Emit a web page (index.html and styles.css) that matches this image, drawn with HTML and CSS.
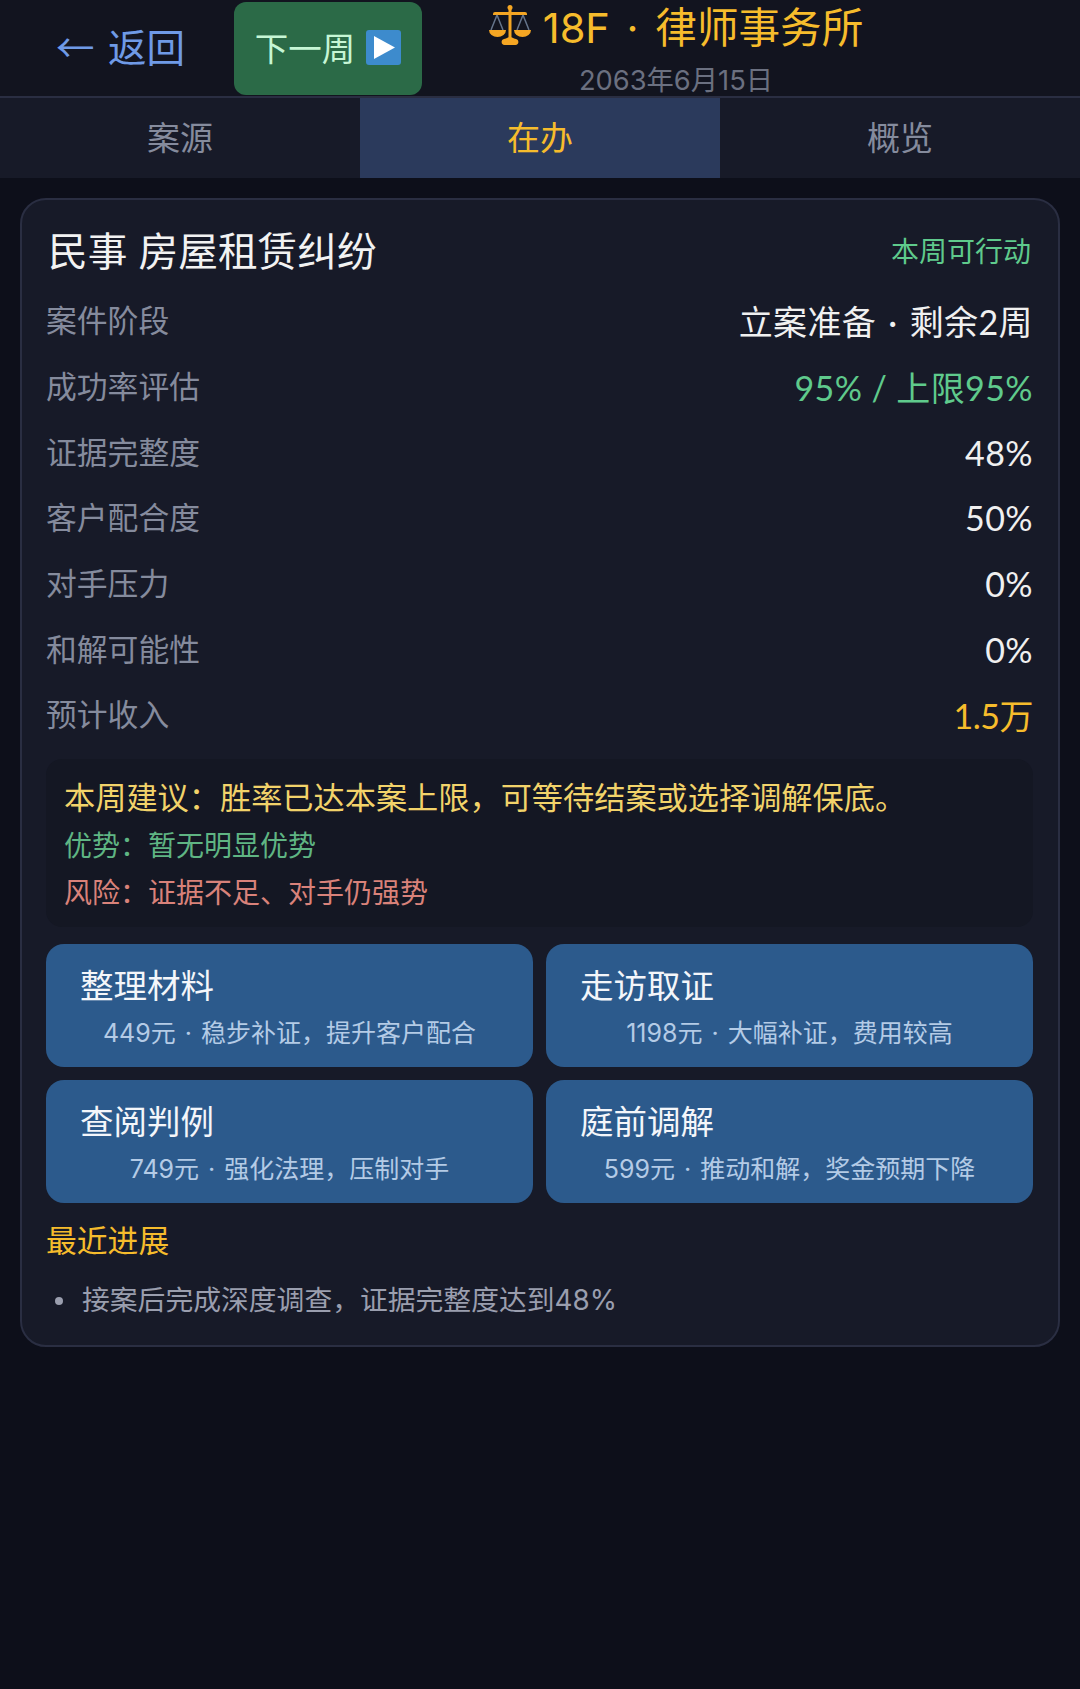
FILE: index.html
```html
<!DOCTYPE html>
<html lang="zh-CN">
<head>
    <meta charset="UTF-8">
    <meta name="viewport" content="width=device-width, initial-scale=1.0">
    <title>18F · 律师事务所</title>
    <link rel="stylesheet" href="styles.css">
</head>
<body>

<header class="topbar">
    <a class="back">← 返回</a>
    <button class="next-week">
        下一周
        <svg class="play-icon" viewBox="0 0 35 35">
            <rect width="35" height="35" rx="3" fill="#3d8bcd"/>
            <path d="M8 6 L29 17.500 L8 29 Z" fill="#fff"/>
        </svg>
    </button>
    <div class="heading">
        <div class="office">
            <svg class="scales-icon" viewBox="0 0 42 40">
                <circle cx="21" cy="2.500" r="2.500" fill="#f5a623"/>
                <path d="M19.500 4 h3 v30 h-3 Z" fill="#f5a623"/>
                <path d="M6 7 h30 a2 2 0 0 1 2 2 v1 h-34 v-1 a2 2 0 0 1 2 -2 Z" fill="#f5a623"/>
                <path d="M8 10 L2 25 M8 10 L14 25 M34 10 L28 25 M34 10 L40 25" stroke="#66758c" stroke-width="1.500" fill="none"/>
                <path d="M0 25 h17 a8.500 7 0 0 1 -17 0 Z M25 25 h17 a8.500 7 0 0 1 -17 0 Z" fill="#f5a623"/>
                <path d="M21 32 c2 0 3 1.500 6 2 c3.500 .6 3 6 -.5 6 h-11 c-3.500 0 -4 -5.400 -.5 -6 c3 -.5 4 -2 6 -2 Z" fill="#f5a623"/>
            </svg>
            <span>18F · 律师事务所</span>
        </div>
        <div class="date">2063年6月15日</div>
    </div>
</header>

<nav class="tabs">
    <div class="tab">案源</div>
    <div class="tab active">在办</div>
    <div class="tab">概览</div>
</nav>

<main class="card">
    <div class="card-head">
        <div class="case-title">民事 房屋租赁纠纷</div>
        <div class="case-status">本周可行动</div>
    </div>

    <div class="row"><span class="label">案件阶段</span><span class="value">立案准备 · 剩余2周</span></div>
    <div class="row"><span class="label">成功率评估</span><span class="value green">95% / 上限95%</span></div>
    <div class="row"><span class="label">证据完整度</span><span class="value">48%</span></div>
    <div class="row"><span class="label">客户配合度</span><span class="value">50%</span></div>
    <div class="row"><span class="label">对手压力</span><span class="value">0%</span></div>
    <div class="row"><span class="label">和解可能性</span><span class="value">0%</span></div>
    <div class="row"><span class="label">预计收入</span><span class="value gold">1.5万</span></div>

    <div class="advice">
        <div class="advice-main">本周建议：胜率已达本案上限，可等待结案或选择调解保底。</div>
        <div class="advice-good">优势：暂无明显优势</div>
        <div class="advice-risk">风险：证据不足、对手仍强势</div>
    </div>

    <div class="actions">
        <button class="action">
            <span class="action-name">整理材料</span>
            <span class="action-desc">449元 · 稳步补证，提升客户配合</span>
        </button>
        <button class="action">
            <span class="action-name">走访取证</span>
            <span class="action-desc">1198元 · 大幅补证，费用较高</span>
        </button>
        <button class="action">
            <span class="action-name">查阅判例</span>
            <span class="action-desc">749元 · 强化法理，压制对手</span>
        </button>
        <button class="action">
            <span class="action-name">庭前调解</span>
            <span class="action-desc">599元 · 推动和解，奖金预期下降</span>
        </button>
    </div>

    <div class="progress-title">最近进展</div>
    <ul class="progress">
        <li>接案后完成深度调查，证据完整度达到48%</li>
    </ul>
</main>

</body>
</html>
```

FILE: styles.css
```css
* {
    box-sizing: border-box;
}
body {
    margin: 0;
    min-height: 1689px;
    background: #0d0f1a;
    font-family: Inter, "Noto Sans CJK SC", sans-serif;
    font-weight: 400;
}
button {
    font-family: inherit;
    border: none;
}
.topbar {
    height: 98px;
    background: #12141f;
    border-bottom: 2px solid #2a2e42;
    display: flex;
    padding-left: 56px;
}
.back {
    width: 178px;
    font-family: "Noto Sans CJK SC", sans-serif;
    font-size: 38.500px;
    line-height: 91px;
    word-spacing: 5px;
    color: #6f9ae6;
}
.next-week {
    width: 188px;
    height: 93px;
    margin-top: 2px;
    padding-bottom: 6px;
    background: #2b6a47;
    border-radius: 12px;
    color: #c6f6d5;
    font-size: 33.500px;
    display: flex;
    align-items: center;
    justify-content: center;
    gap: 11px;
}
.play-icon {
    width: 35px;
    height: 35px;
    margin-top: 2px;
}
.heading {
    width: 432px;
    margin-left: 38px;
    text-align: center;
}
.office {
    display: flex;
    align-items: center;
    justify-content: center;
    gap: 12px;
    height: 50px;
    font-size: 41.600px;
    word-spacing: 5px;
    color: #f6bc2c;
}
.scales-icon {
    width: 42px;
    height: 40px;
}
.date {
    margin-top: 6px;
    font-size: 27.300px;
    line-height: 50px;
    color: #6b7080;
}
.tabs {
    display: grid;
    grid-template-columns: repeat(3, 1fr);
    height: 80px;
    background: #171a28;
}
.tab {
    text-align: center;
    font-size: 33px;
    line-height: 80px;
    color: #858b9d;
}
.tab.active {
    background: #2b3a5c;
    color: #f6bc2c;
}
.card {
    width: 1040px;
    margin: 20px 20px 0;
    height: 1149px;
    background: #171a28;
    border: 2px solid #2a2e42;
    border-radius: 26px;
    padding: 18px 25px 20px 24px;
}
.card-head {
    display: flex;
    justify-content: space-between;
    align-items: center;
    height: 60px;
    margin-bottom: 9px;
    padding: 0 2px;
}
.case-title {
    font-size: 39.700px;
    color: #f2f2f2;
}
.case-status {
    padding-top: 3px;
    font-size: 28px;
    color: #5fca8c;
}
.row {
    display: flex;
    justify-content: space-between;
    align-items: center;
    height: 65.700px;
}
.label {
    padding-bottom: 2px;
    font-size: 30.800px;
    color: #858b9d;
}
.value {
    padding-top: 2px;
    font-family: Lato, "Noto Sans CJK SC", sans-serif;
    font-size: 34px;
    letter-spacing: 0.4px;
    word-spacing: 3px;
    color: #f0f0f0;
}
.green {
    word-spacing: 0;
    color: #5fca8c;
}
.gold {
    letter-spacing: -0.5px;
    color: #f6bc2c;
}
.advice {
    margin-top: 12px;
    height: 168px;
    background: #141723;
    border-radius: 16px;
    padding: 16px 18px;
}
.advice-main {
    font-size: 31.200px;
    line-height: 46px;
    color: #f2d36a;
}
.advice-good {
    margin-top: 1px;
    font-size: 28px;
    line-height: 48px;
    color: #5fb583;
}
.advice-risk {
    margin-top: -1px;
    font-size: 28px;
    line-height: 48px;
    color: #d9827a;
}
.actions {
    display: grid;
    grid-template-columns: 1fr 1fr;
    gap: 13px;
    margin-top: 17px;
}
.action {
    height: 123px;
    background: #2c5a8c;
    border-radius: 18px;
    padding: 2px 34px 0;
    text-align: center;
}
.action-name {
    display: block;
    text-align: left;
    font-size: 33.500px;
    line-height: 53px;
    color: #f4f6fa;
}
.action-desc {
    display: block;
    font-size: 25px;
    line-height: 40px;
    word-spacing: 2px;
    color: #b4cbe6;
}
.progress-title {
    margin-top: 13px;
    font-size: 30.800px;
    line-height: 50px;
    color: #f6bc2c;
}
.progress {
    margin: 9px 0 0;
    padding: 0;
    list-style: none;
}
.progress li {
    position: relative;
    padding-left: 36px;
    font-size: 27.800px;
    line-height: 50px;
    color: #9a9eae;
}
.progress li::before {
    content: "";
    position: absolute;
    left: 9px;
    top: 22px;
    width: 8px;
    height: 8px;
    border-radius: 50%;
    background: #9a9eae;
}
```
